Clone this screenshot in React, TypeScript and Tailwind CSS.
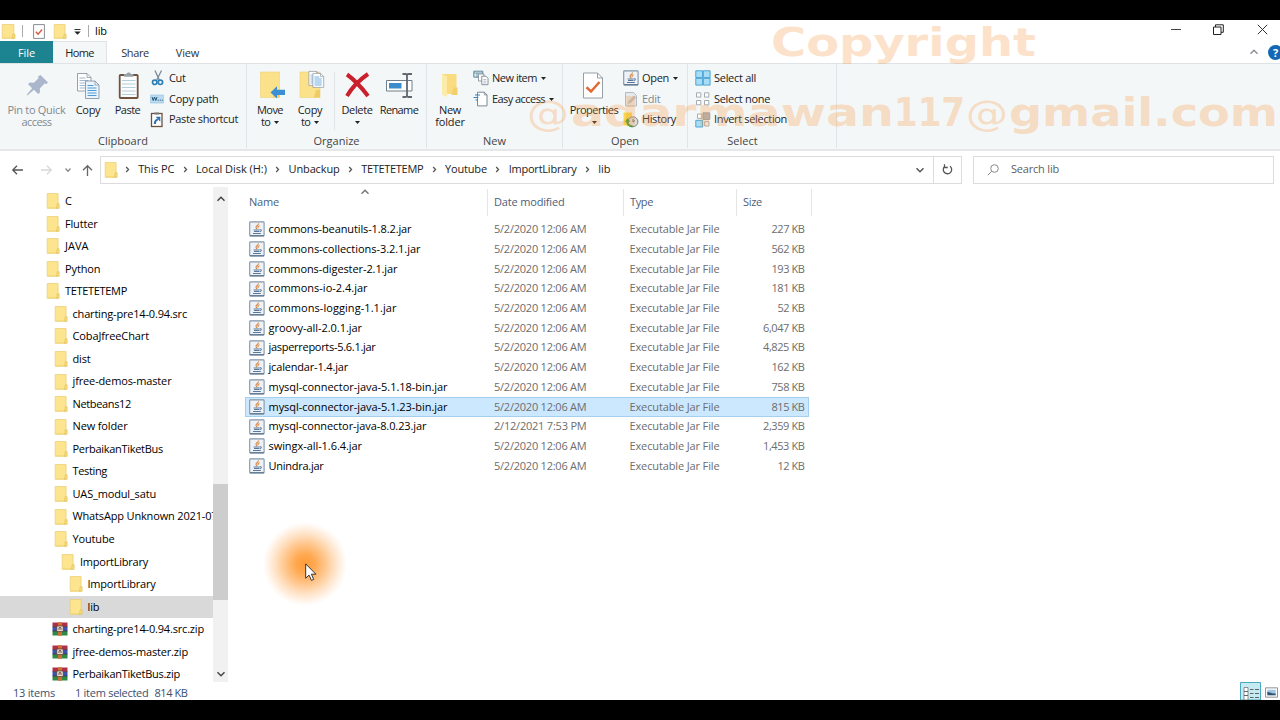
import { useLayoutEffect, useRef, type ReactNode } from 'react';

/** Text that is tracked so that it fills exactly `w` pixels. */
function Fit({ w, children, className = '' }: { w: number; children: string; className?: string }) {
  const ref = useRef<HTMLSpanElement>(null);
  useLayoutEffect(() => {
    const el = ref.current;
    if (!el) return;
    el.style.letterSpacing = '0px';
    const natural = el.getBoundingClientRect().width;
    el.style.letterSpacing = `${(w - natural) / children.length}px`;
  }, [w, children]);
  return (
    <span ref={ref} className={`inline-block shrink-0 whitespace-pre ${className}`}>
      {children}
    </span>
  );
}

function Folder({ className = 'h-4 w-[14px]' }: { className?: string }) {
  return (
    <svg viewBox="0 0 14 16" preserveAspectRatio="none" className={`shrink-0 overflow-visible ${className}`}>
      <path d="M.2.500h10.900v14.800H.2z" fill="#fde58f" stroke="#e9cb70" strokeWidth=".7" />
      <path d="M10.200 10.800h2v4.500H9.400z" fill="#f9db76" stroke="#d9b955" strokeWidth=".5" />
      <path d="M.6 14.800h8.600" stroke="#f3d774" strokeWidth=".8" />
    </svg>
  );
}

function Jar({ className = 'h-4 w-4' }: { className?: string }) {
  return (
    <svg viewBox="0 0 16 16" fill="none" className={`shrink-0 ${className}`}>
      <rect x=".7" y=".9" width="14.400" height="14.200" rx=".8" fill="#eef2f6" stroke="#8197ac" strokeWidth="1.100" />
      <path d="M1 14.600h14" stroke="#60788f" strokeWidth="1" />
      <path d="M9.300 2.400c1 1.600-2.700 2.300-2.300 3.900.1.700.9 1.100.8 1.900M10.600 4.700C8.800 5.300 8.700 6.200 9.300 7.100" stroke="#d58a48" strokeWidth="1.100" />
      <path d="M4.600 8.900h6.200M5 10.500h5.200M4 12.500h7.800M11 8.800c1.900-.3 1.700 1.600-.3 2" stroke="#57789b" strokeWidth="1.050" />
    </svg>
  );
}

function Rar() {
  return (
    <svg viewBox="0 0 16 14" className="-ml-px mr-px h-[14px] w-4 shrink-0">
      <path d="M.5.500h15v4.300H.5z" fill="#b0304a" />
      <path d="M.5 4.800h15v4.200H.5z" fill="#3a55b0" />
      <path d="M.5 9h15v4.500H.5z" fill="#2f8a45" />
      <path d="M.5 4.700h15M.5 9h15" stroke="#3a2430" strokeWidth=".6" />
      <path d="M6 .3h4v13.400H6z" fill="#cf6f35" />
      <path d="M4.800 4h6.400v5.600H4.800z" fill="#f2ebe6" stroke="#5b3a2e" strokeWidth=".8" />
      <path d="M7 8.200V5.700h2v2.500" fill="none" stroke="#5b3a2e" strokeWidth=".9" />
    </svg>
  );
}

function Chev({ d, className = 'h-[10px] w-[10px]' }: { d: 'r' | 'd' | 'u'; className?: string }) {
  const p = { r: 'M3.500 2.200l2.700 2.800-2.700 2.800', d: 'M1.500 3.200L5 6.800l3.500-3.600', u: 'M1.500 6.800L5 3.200l3.500 3.600' }[d];
  return (
    <svg viewBox="0 0 10 10" fill="none" stroke="currentColor" className={`shrink-0 ${className}`}>
      <path d={p} strokeWidth="1.400" />
    </svg>
  );
}

function Caret({ className = '' }: { className?: string }) {
  return (
    <svg viewBox="0 0 5 3" className={`h-[3px] w-[5px] shrink-0 ${className}`}>
      <path d="M0 0h5L2.500 3z" fill="#222" />
    </svg>
  );
}

function Page({ x = 0, y = 0, lines = '#9db8cf', fill = '#fff' }: { x?: number; y?: number; lines?: string; fill?: string }) {
  return (
    <g transform={`translate(${x} ${y})`}>
      <path d="M.5.500h9.500l4 4v13.500H.5z" fill={fill} stroke="#7e8b98" strokeWidth=".8" />
      <path d="M10 .5v4h4" fill="none" stroke="#7e8b98" strokeWidth=".7" />
      <path d="M2.500 5h6M2.500 7.500h9M2.500 10h9M2.500 12.500h9M2.500 15h9" stroke={lines} strokeWidth="1" />
    </g>
  );
}

const big = 'h-[30px] w-[30px] overflow-visible';
const PinIcon = () => (
  <svg viewBox="0 0 30 30" className={big}>
    <path d="M18.500 5l7.500 7.500-1.700 1.500-1.700-.5-4.800 5 .2 4-1.800 1.500-4.300-4.300-6.500 5.700-.6-.6 5.300-6.500-4-4 1.500-1.800 4.300.2 4.600-4.500-.5-1.800z" fill="#a9b6cb" />
  </svg>
);
const CopyIcon = () => (
  <svg viewBox="0 0 30 30" className={big}>
    <Page x={4} y={3} />
    <Page x={12} y={10.500} lines="#4c9bd8" fill="#eaf4fc" />
  </svg>
);
const PasteIcon = () => (
  <svg viewBox="0 0 30 30" className={big}>
    <rect x="6.700" y="5" width="18" height="23" rx=".8" fill="#fbfcfd" stroke="#70543f" strokeWidth="1.800" />
    <path d="M11 6.700V4h2.500c.4-2 4-2 4.400 0h2.500v2.700z" fill="#9aa1a7" />
    <path d="M9 10.500h13.500M9 14h13.500M9 17.500h13.500M9 21h13.500M9 24.500h13.500" stroke="#b5cede" />
  </svg>
);
const MoveIcon = () => (
  <svg viewBox="0 0 30 30" className={big}>
    <path d="M5.500 2h19v25.500h-19z" fill="#fbe18a" stroke="#efd27b" strokeWidth=".6" />
    <path d="M20 21h4.500v6.500H18z" fill="#efcb63" />
    <path d="M15.500 22.500l6.500-6.300v3.500h8v5.300h-8v3.600z" fill="#3c8fd3" />
  </svg>
);
const CopyToIcon = () => (
  <svg viewBox="0 0 30 30" className={big}>
    <path d="M5 2h20v25.500H5z" fill="#fbe18a" stroke="#efd27b" strokeWidth=".6" />
    <path d="M21 20h4v7.500h-6z" fill="#efcb63" />
    <g transform="translate(13.500 1) scale(.8)">
      <Page lines="#6ca8d8" />
      <Page x={5} y={2.500} lines="#4c9bd8" />
    </g>
  </svg>
);
const DeleteIcon = () => (
  <svg viewBox="0 0 30 30" className={big}>
    <path d="M5 4.500C12 9.500 20 18 26 26M26 4C18 9.500 10 17.500 5 26" fill="none" stroke="#c9202b" strokeWidth="4" />
  </svg>
);
const RenameIcon = () => (
  <svg viewBox="0 0 30 30" className={big}>
    <path d="M2.500 10.500h25.500v10.500H2.500z" fill="#fff" stroke="#6f7f8d" />
    <path d="M5 13h12.500v5.500H5z" fill="#3a8ccc" />
    <path d="M18.500 4h3c1 0 1.500.6 1.500 1.500v20c0 1-.5 1.500-1.500 1.500h-3M28 4h-3.300c-1 0-1.700.6-1.700 1.500M28 27h-3.300c-1 0-1.700-.5-1.700-1.500" fill="none" stroke="#5f676e" strokeWidth="1.800" />
  </svg>
);
const NewFolderIcon = () => (
  <svg viewBox="0 0 30 30" className={big}>
    <path d="M7 4h14.500v20H7z" fill="#f9dc80" />
    <path d="M7 4l5 2.500v20.500l-5-2.500z" fill="#fdeba8" />
    <path d="M18.500 17.500h4v7.500h-6z" fill="#f2cf6b" />
  </svg>
);
const PropsIcon = () => (
  <svg viewBox="0 0 30 30" className={big}>
    <path d="M4.500 3h14l5 5v20h-19z" fill="#fff" stroke="#8b949c" strokeWidth=".9" />
    <path d="M18.500 3v5h5" fill="none" stroke="#8b949c" strokeWidth=".9" />
    <path d="M7.500 17.300l4.500 4.200 8.500-9.500" fill="none" stroke="#df6a35" strokeWidth="2.600" />
  </svg>
);

const small = 'h-4 w-4 shrink-0 overflow-visible';
const CutIcon = () => (
  <svg viewBox="0 0 16 16" fill="none" className={small}>
    <path d="M5 .5l4.500 10M11.500.5L6.500 10.500" stroke="#7b8896" strokeWidth="1.300" />
    <ellipse cx="4.700" cy="12.300" rx="2.200" ry="2.200" stroke="#2b7fb5" strokeWidth="1.700" />
    <ellipse cx="10.400" cy="12.300" rx="2.200" ry="2.200" stroke="#2b7fb5" strokeWidth="1.700" />
  </svg>
);
const PathIcon = () => (
  <svg viewBox="0 0 16 16" fill="none" className={small}>
    <path d="M.5 4h13v8H.5z" fill="#b9dcf3" stroke="#9cc6e2" strokeWidth=".7" />
    <path d="M2 6l1.200 3.500L4.500 6l1.300 3.500L7 6M7.800 9.200h1M9.800 9.200h1M11.800 9.200h1" stroke="#27506e" />
  </svg>
);
const ShortcutIcon = () => (
  <svg viewBox="0 0 16 16" fill="none" className={small}>
    <rect x="1.500" y="1.500" width="10.500" height="13" fill="#fff" stroke="#6e513d" strokeWidth="1.300" />
    <path d="M4.500.5h4.500v2H4.500z" fill="#777" />
    <path d="M4.800 12c0-3 .8-4 3-4.600" stroke="#2f6eae" strokeWidth="2" />
    <path d="M5.600 4.700h4.700v5z" fill="#2f6eae" />
  </svg>
);
const NewItemIcon = () => (
  <svg viewBox="0 0 16 16" fill="none" className={small}>
    <path d="M.8 1.200h9v6h-9z" fill="#d9edf6" stroke="#62879c" />
    <path d="M1 3h9M4 3v4" stroke="#62879c" strokeWidth=".8" />
    <path d="M5.500 4h5.500v7H5.500z" fill="#fff" stroke="#7b8894" strokeWidth=".8" />
    <path d="M8.800 6.200h4.200l2 2v6.500H8.800z" fill="#fff" stroke="#7b8894" strokeWidth=".9" />
    <path d="M10.300 9.500h3M10.300 11.200h3M10.300 12.900h3" stroke="#93a4b2" strokeWidth=".7" />
  </svg>
);
const EasyIcon = () => (
  <svg viewBox="0 0 16 16" fill="none" className={small}>
    <path d="M4.500 1.200h6.800l2.700 2.700v11H4.500z" fill="#fff" stroke="#7b8894" />
    <path d="M11.300 1.200v2.700H14" stroke="#7b8894" strokeWidth=".8" />
    <path d="M2 4h5M.5 6.500h4.800M2.500 9h2.500" stroke="#3b83bd" strokeWidth="1.100" />
  </svg>
);
const EditIcon = () => (
  <svg viewBox="0 0 16 16" fill="none" className={small}>
    <path d="M2.500 1.500h8l3 3v10.500h-11z" fill="#e6e8eb" stroke="#b5babf" />
    <path d="M4.500 13l1-3L11 4.500l2.300 2L7.500 12z" fill="#bcc2c7" />
  </svg>
);
const HistoryIcon = () => (
  <svg viewBox="0 0 16 16" fill="none" className={small}>
    <path d="M.5.500h8.500v13H.5z" fill="#f6d84f" />
    <circle cx="10" cy="9.800" r="4.900" fill="#d9dfdc" stroke="#7b8583" />
    <path d="M10 10V7M10 10l2-1.500" stroke="#656c70" />
    <path d="M9.500 14.300c-4 0-5.500-2.500-5-5.800" stroke="#42a238" strokeWidth="2.200" />
    <path d="M1.800 9.800l3-3.800 2.500 3.800z" fill="#42a238" />
  </svg>
);
const AllIcon = () => (
  <svg viewBox="0 0 16 16" fill="none" className={small}>
    <path d="M.8.800h6.800v6.800H.8zM8.300.8h6.800v6.800H8.300zM.8 8.300h6.800v6.800H.8zM8.300 8.300h6.800v6.800H8.300z" fill="#a9ddf6" stroke="#3d9dd2" strokeWidth=".9" />
  </svg>
);
const NoneIcon = () => (
  <svg viewBox="0 0 16 16" fill="none" className={small}>
    <path d="M1.500 1.800h4.300v4.300H1.500zM9.500 1.800h4.300v4.300H9.500zM1.500 9.500h4.300v4.300H1.500zM9.500 9.500h4.300v4.300H9.500z" fill="#fff" stroke="#9da3a8" strokeWidth=".9" />
  </svg>
);
const InvertIcon = () => (
  <svg viewBox="0 0 16 16" fill="none" className={small}>
    <path d="M2.500 2h4.300v4.300H2.500zM9.700 9.700H14V14H9.700z" fill="#fff" stroke="#9da3a8" strokeWidth=".9" />
    <path d="M8 .8h6.800v6.700H8z" fill="#aab4bc" stroke="#8b949b" strokeWidth=".8" />
    <path d="M.8 8.300h6.800v6.700H.8z" fill="#a9ddf6" stroke="#3d9dd2" strokeWidth=".9" />
  </svg>
);

function Group({ label, width, children, pad = '' }: { label: string; width: string; children: ReactNode; pad?: string }) {
  return (
    <div className={`flex h-[84px] flex-col border-r border-[#e2e5e7] ${width}`}>
      <div className={`flex h-[69px] pt-[4px] ${pad}`}>{children}</div>
      <div className="text-center leading-[15px] text-[#444]">{label}</div>
    </div>
  );
}

function BigButton({ icon, width, lines, caret, dim }: { icon: ReactNode; width: string; lines: [string, number][]; caret?: 'inline' | 'below'; dim?: boolean }) {
  return (
    <div className={`flex shrink-0 flex-col items-center pt-[2px] ${width} ${dim ? 'text-[#828890]' : 'text-[#222]'}`}>
      {icon}
      <div className="mt-[4px] flex flex-col items-center">
        {lines.map(([t, w], i) => (
          <div key={t} className="flex h-3 items-center justify-center gap-1 leading-3">
            <Fit w={w}>{t}</Fit>
            {caret === 'inline' && i === lines.length - 1 && <Caret />}
          </div>
        ))}
        {caret === 'below' && <Caret className="mt-[5px]" />}
      </div>
    </div>
  );
}

function SmallList({ items, className = '' }: { items: { icon: ReactNode; text: string; w: number; caret?: boolean; dim?: boolean }[]; className?: string }) {
  return (
    <div className={`flex shrink-0 flex-col ${className}`}>
      {items.map((it) => (
        <div key={it.text} className={`flex h-[20.700px] items-center gap-[3px] ${it.dim ? 'text-[#828890]' : 'text-[#222]'}`}>
          {it.icon}
          <Fit w={it.w}>{it.text}</Fit>
          {it.caret && <Caret className="ml-[1px]" />}
        </div>
      ))}
    </div>
  );
}

const crumbs: [string, number][] = [
  ['This PC', 36], ['Local Disk (H:)', 71], ['Unbackup', 51], ['TETETETEMP', 62], ['Youtube', 42], ['ImportLibrary', 68], ['lib', 12],
];

const tree: { t: string; w: number; pad: string; zip?: boolean; sel?: boolean }[] = [
  { t: 'C', w: 7, pad: 'pl-[47px]' },
  { t: 'Flutter', w: 32.5, pad: 'pl-[47px]' },
  { t: 'JAVA', w: 23.5, pad: 'pl-[47px]' },
  { t: 'Python', w: 35.5, pad: 'pl-[47px]' },
  { t: 'TETETETEMP', w: 62, pad: 'pl-[47px]' },
  { t: 'charting-pre14-0.94.src', w: 114.5, pad: 'pl-[54.5px]' },
  { t: 'CobaJfreeChart', w: 76.5, pad: 'pl-[54.5px]' },
  { t: 'dist', w: 18, pad: 'pl-[54.5px]' },
  { t: 'jfree-demos-master', w: 99, pad: 'pl-[54.5px]' },
  { t: 'Netbeans12', w: 58.5, pad: 'pl-[54.5px]' },
  { t: 'New folder', w: 55, pad: 'pl-[54.5px]' },
  { t: 'PerbaikanTiketBus', w: 90.5, pad: 'pl-[54.5px]' },
  { t: 'Testing', w: 34.5, pad: 'pl-[54.5px]' },
  { t: 'UAS_modul_satu', w: 83.5, pad: 'pl-[54.5px]' },
  { t: 'WhatsApp Unknown 2021-07', w: 145, pad: 'pl-[54.5px]' },
  { t: 'Youtube', w: 42, pad: 'pl-[54.5px]' },
  { t: 'ImportLibrary', w: 68, pad: 'pl-[62px]' },
  { t: 'ImportLibrary', w: 68, pad: 'pl-[69.5px]' },
  { t: 'lib', w: 12, pad: 'pl-[69.5px]', sel: true },
  { t: 'charting-pre14-0.94.src.zip', w: 131.5, pad: 'pl-[52.5px]', zip: true },
  { t: 'jfree-demos-master.zip', w: 115.5, pad: 'pl-[52.5px]', zip: true },
  { t: 'PerbaikanTiketBus.zip', w: 107.5, pad: 'pl-[52.5px]', zip: true },
];

const files: [string, number, string, string, number][] = [
  ['commons-beanutils-1.8.2.jar', 143, '5/2/2020 12:06 AM', '227 KB', 33],
  ['commons-collections-3.2.1.jar', 152, '5/2/2020 12:06 AM', '562 KB', 33],
  ['commons-digester-2.1.jar', 129, '5/2/2020 12:06 AM', '193 KB', 33],
  ['commons-io-2.4.jar', 99, '5/2/2020 12:06 AM', '181 KB', 33],
  ['commons-logging-1.1.jar', 128, '5/2/2020 12:06 AM', '52 KB', 27],
  ['groovy-all-2.0.1.jar', 93.5, '5/2/2020 12:06 AM', '6,047 KB', 41.5],
  ['jasperreports-5.6.1.jar', 107, '5/2/2020 12:06 AM', '4,825 KB', 41.5],
  ['jcalendar-1.4.jar', 79.5, '5/2/2020 12:06 AM', '162 KB', 33],
  ['mysql-connector-java-5.1.18-bin.jar', 179, '5/2/2020 12:06 AM', '758 KB', 33],
  ['mysql-connector-java-5.1.23-bin.jar', 179, '5/2/2020 12:06 AM', '815 KB', 33],
  ['mysql-connector-java-8.0.23.jar', 158, '2/12/2021 7:53 PM', '2,359 KB', 41.5],
  ['swingx-all-1.6.4.jar', 93.5, '5/2/2020 12:06 AM', '1,453 KB', 41.5],
  ['Unindra.jar', 55, '5/2/2020 12:06 AM', '12 KB', 27],
];

export default function App() {
  return (
    <div className="relative h-[720px] w-[1280px] overflow-hidden bg-black py-5 font-['Open_Sans','Noto_Sans',sans-serif] text-[11px] text-black">
      <div className="flex h-[680px] flex-col overflow-hidden bg-white">
        {/* title bar */}
        <div className="flex h-[21px] shrink-0 items-center pt-px">
          <Folder className="ml-[2px] h-[15px] w-[15px]" />
          <div className="ml-[5px] h-3 w-px bg-[#aaa]" />
          <svg viewBox="0 0 12 15" fill="none" className="ml-[10px] h-[15px] w-3">
            <path d="M.6.600h10.800v13.800H.6z" fill="#fff" stroke="#878d93" />
            <path d="M2.800 7.800l2.300 2.300 4-4.600" stroke="#d25a42" strokeWidth="1.400" />
          </svg>
          <Folder className="ml-[9px] h-[15px] w-[14px]" />
          <svg viewBox="0 0 7 6" className="ml-[6px] mt-px h-[6px] w-[7px]">
            <path d="M.5.500h6" stroke="#333" />
            <path d="M.3 2.500h6.400L3.500 5.700z" fill="#222" />
          </svg>
          <div className="ml-[7px] h-3 w-px bg-[#aaa]" />
          <Fit w={12} className="ml-[6px]">lib</Fit>
          <div className="ml-auto flex items-center pb-[3px] text-[#333]">
            <div className="mr-[32px] h-px w-[10px] bg-[#444]" />
            <svg viewBox="0 0 11 11" fill="none" stroke="#222" className="mr-[33px] h-[11px] w-[11px]">
              <path d="M.5 3h7.500v7.500H.5zM2.500 3V.8h7.800v7.500H8" />
            </svg>
            <svg viewBox="0 0 11 11" fill="none" stroke="#333" className="mr-[12px] h-[11px] w-[11px]">
              <path d="M.8.800l9.400 9.400M10.200.8L.8 10.200" />
            </svg>
          </div>
        </div>
        {/* tabs */}
        <div className="flex h-[22px] shrink-0">
          <div className="flex w-[53px] items-center justify-center bg-[#1b8490] pt-[2px] text-white"><Fit w={17}>File</Fit></div>
          <div className="flex w-[54px] items-center justify-center border-r border-t border-[#dfe3e5] bg-[#f4f7f8] pt-[1px] text-[#222]"><Fit w={28.5}>Home</Fit></div>
          <div className="flex w-[56px] items-center justify-center pt-[2px] text-[#333]"><Fit w={27.5}>Share</Fit></div>
          <div className="flex w-[49px] items-center justify-center pt-[2px] text-[#333]"><Fit w={23.5}>View</Fit></div>
          <div className="-mr-[3px] ml-auto flex items-center">
            <Chev d="u" className="mr-[9px] h-[10px] w-[10px] text-[#8a8f94]" />
            <div className="h-[15px] w-[15px] shrink-0 rounded-full bg-[#1467b3] text-center text-[11px] font-bold leading-[15px] text-white">?</div>
          </div>
        </div>
        {/* ribbon */}
        <div className="flex h-[88px] shrink-0 border-b-2 border-t border-b-[#e6e7e8] border-t-[#dfe3e5] bg-[#f4f7f8]">
          <Group label="Clipboard" width="w-[247px]" pad="pl-[5px]">
            <BigButton icon={<PinIcon />} width="w-[63px]" lines={[['Pin to Quick', 58], ['access', 30]]} dim />
            <BigButton icon={<CopyIcon />} width="w-[40px]" lines={[['Copy', 24.5]]} />
            <BigButton icon={<PasteIcon />} width="w-[39px]" lines={[['Paste', 25.5]]} />
            <SmallList
              className="ml-[3px]"
              items={[
                { icon: <CutIcon />, text: 'Cut', w: 16.5 },
                { icon: <PathIcon />, text: 'Copy path', w: 49.5 },
                { icon: <ShortcutIcon />, text: 'Paste shortcut', w: 69 },
              ]}
            />
          </Group>
          <Group label="Organize" width="w-[180px]" pad="pl-[3px]">
            <BigButton icon={<MoveIcon />} width="w-[40px]" lines={[['Move', 26], ['to', 9]]} caret="inline" />
            <BigButton icon={<CopyToIcon />} width="w-[40px]" lines={[['Copy', 24.5], ['to', 9]]} caret="inline" />
            <div className="ml-[4px] mr-[2px] mt-1 h-[58px] w-px shrink-0 bg-[#e1e4e6]" />
            <BigButton icon={<DeleteIcon />} width="w-[40px]" lines={[['Delete', 31]]} caret="below" />
            <BigButton icon={<RenameIcon />} width="w-[44px]" lines={[['Rename', 38.5]]} />
          </Group>
          <Group label="New" width="w-[136px]" pad="pl-[3px]">
            <BigButton icon={<NewFolderIcon />} width="w-[40px]" lines={[['New', 22], ['folder', 29.5]]} />
            <SmallList
              className="ml-[3px]"
              items={[
                { icon: <NewItemIcon />, text: 'New item', w: 45, caret: true },
                { icon: <EasyIcon />, text: 'Easy access', w: 53, caret: true },
              ]}
            />
          </Group>
          <Group label="Open" width="w-[125px]" pad="pl-[2px]">
            <BigButton icon={<PropsIcon />} width="w-[58px]" lines={[['Properties', 48.5]]} caret="below" />
            <SmallList
              items={[
                { icon: <Jar />, text: 'Open', w: 27, caret: true },
                { icon: <EditIcon />, text: 'Edit', w: 18.5, dim: true },
                { icon: <HistoryIcon />, text: 'History', w: 34 },
              ]}
            />
          </Group>
          <div className="flex h-[84px] border-r border-[#e2e5e7] pr-[39px]">
            <div className="flex w-[109px] flex-col">
              <div className="flex h-[69px] pl-[7px] pt-[4px]">
                <SmallList
                  items={[
                    { icon: <AllIcon />, text: 'Select all', w: 42 },
                    { icon: <NoneIcon />, text: 'Select none', w: 56 },
                    { icon: <InvertIcon />, text: 'Invert selection', w: 73 },
                  ]}
                />
              </div>
              <div className="text-center leading-[15px] text-[#444]">Select</div>
            </div>
          </div>
        </div>
        {/* address bar */}
        <div className="flex h-[36px] shrink-0 items-center pt-[1px]">
          <svg viewBox="0 0 88 14" fill="none" strokeWidth="1.300" className="ml-[10px] h-[14px] w-[88px]">
            <path d="M13 7H3M7 2.800L2.800 7 7 11.200" stroke="#555" />
            <path d="M31 7h10M37 2.800L41.200 7 37 11.200" stroke="#d5d8da" />
            <path d="M55.500 5.500l2.500 2.700 2.500-2.700" stroke="#888" />
            <path d="M77.500 13V3M73 7.300l4.500-4.600L82 7.300" stroke="#666" />
          </svg>
          <div className="ml-[2px] flex h-[28px] w-[862px] items-center border border-[#dcdcdc]">
            <Folder className="ml-[4px] h-4 w-[14px]" />
            <div className="ml-[-2.500px] flex items-center">
              {crumbs.map(([t, w]) => (
                <div key={t} className="flex items-center">
                  <div className="flex w-[21.700px] justify-center text-[#555]"><Chev d="r" className="h-[9px] w-[9px]" /></div>
                  <Fit w={w} className="text-[#222]">{t}</Fit>
                </div>
              ))}
            </div>
            <Chev d="d" className="ml-auto mr-[8px] h-[10px] w-[10px] text-[#555]" />
            <div className="flex h-full w-[28px] items-center justify-center border-l border-[#dcdcdc]">
              <svg viewBox="0 0 11 11" fill="none" stroke="#555" strokeWidth="1.300" className="h-[11px] w-[11px]">
                <path d="M2.800 2.300A4.200 4.200 0 1 0 8 2.200M2.500.3v3.200h3.300" />
              </svg>
            </div>
          </div>
          <div className="ml-[11px] flex h-[28px] w-[301px] items-center border border-[#dcdcdc]">
            <svg viewBox="0 0 12 12" fill="none" stroke="#888" className="ml-[13px] h-3 w-3">
              <circle cx="7.500" cy="4.500" r="3.800" />
              <path d="M4.700 7.300L.8 11.200" />
            </svg>
            <Fit w={48} className="ml-[12px] text-[#606060]">Search lib</Fit>
          </div>
        </div>
        {/* body */}
        <div className="flex h-[495px] shrink-0">
          <div className="w-[213px] shrink-0 overflow-hidden pt-[3px]">
            {tree.map((n, i) => (
              <div key={i} className={`flex h-[22.540px] items-center ${n.pad} ${n.sel ? 'bg-[#d9d9d9]' : ''}`}>
                {n.zip ? <Rar /> : <Folder />}
                <Fit w={n.w} className="ml-[4px]">{n.t}</Fit>
              </div>
            ))}
          </div>
          <div className="flex w-[15px] shrink-0 flex-col items-center bg-[#f1f1f1]">
            <Chev d="u" className="mt-[7px] h-[10px] w-[10px] text-[#444]" />
            <div className="mt-[280px] h-[116px] w-full bg-[#cdcdcd]" />
            <Chev d="d" className="mb-[3px] mt-auto h-[10px] w-[10px] text-[#444]" />
          </div>
          <div className="ml-[4px] flex flex-col">
            <div className="flex h-[32.500px] pb-[4px] pt-[2px] text-[#4c607a]">
              <div className="relative flex w-[256px] items-center border-r border-[#e5e5e5] pl-[17px]">
                <Fit w={30}>Name</Fit>
                <Chev d="u" className="absolute left-[128px] top-[-2px] h-[10px] w-[10px] text-[#777]" />
              </div>
              <div className="flex w-[136px] items-center border-r border-[#e5e5e5] pl-[6px]"><Fit w={70.5}>Date modified</Fit></div>
              <div className="flex w-[113px] items-center border-r border-[#e5e5e5] pl-[6px]"><Fit w={23}>Type</Fit></div>
              <div className="flex w-[75px] items-center border-r border-[#e5e5e5] pl-[6px]"><Fit w={19}>Size</Fit></div>
            </div>
            <div className="ml-[13px] w-[564px]">
              {files.map(([name, w, date, size, sw], i) => (
                <div key={name} className={`flex h-[19.730px] items-center ${i === 9 ? 'bg-[#cce8ff] outline -outline-offset-1 outline-[#a5cfec]' : ''}`}>
                  <div className="flex w-[249px] items-center pl-[4px]">
                    <Jar />
                    <Fit w={w} className="ml-[3.500px]">{name}</Fit>
                  </div>
                  <Fit w={92.5} className="text-[#6d6d6d]">{date}</Fit>
                  <Fit w={90} className="ml-[43px] text-[#6d6d6d]">Executable Jar File</Fit>
                  <Fit w={sw} className="ml-auto mr-[4.500px] text-[#6d6d6d]">{size}</Fit>
                </div>
              ))}
            </div>
          </div>
        </div>
        {/* status bar */}
        <div className="flex h-[18px] shrink-0 items-center pl-[13px] text-[#3b4f70]">
          <div className="flex items-center pt-[5px]">
            <Fit w={42}>13 items</Fit>
            <Fit w={73.5} className="ml-[20px]">1 item selected</Fit>
            <Fit w={33} className="ml-[6px]">814 KB</Fit>
          </div>
          <svg viewBox="0 0 21 18" fill="none" className="ml-auto h-[18px] w-[21px]">
            <path d="M.5.500h20V18H.5z" fill="#c5eaf1" stroke="#4aa9bd" />
            <path d="M4 5.500h4V18H4z" fill="#fff" stroke="#777" strokeWidth=".8" />
            <path d="M4 9.500h4M4 13.500h4M10 7.500h3.500M15 7.500h4M10 11.500h3.500M15 11.500h4M10 15.500h3.500M15 15.500h4" stroke="#555" strokeWidth=".9" />
          </svg>
          <svg viewBox="0 0 14 11" fill="none" className="ml-[4px] mr-[2px] mt-[2px] h-[11px] w-[13px]">
            <path d="M.5.500h13v10H.5z" fill="#fff" stroke="#888" />
            <path d="M2.500 2.500h9v6h-9z" fill="#9fc6e3" />
            <path d="M2.500 5c3 0 5 2 9 1.500v2h-9z" fill="#33546f" />
          </svg>
        </div>
      </div>

      {/* pointer highlight */}
      <div className="absolute left-[263px] top-[522px] h-[84px] w-[84px] bg-[radial-gradient(closest-side,#ff9c38_0%,#ffa850_22%,#ffc68c_48%,#ffe3c8_72%,#fff6ee_90%,#ffffff00_100%)]" />
      <svg viewBox="0 0 12 19" className="absolute left-[305px] top-[563px] h-[19px] w-3">
        <path d="M.7.900v14.300l3.400-3.100 2.300 5.300 2.300-1-2.300-5.200h4.500z" fill="#fff" stroke="#222" strokeWidth=".9" />
      </svg>

      {/* watermark */}
      <svg viewBox="0 0 760 120" className="pointer-events-none absolute left-[520px] top-5 h-[120px] w-[760px] fill-[#f79a46] font-['DejaVu_Sans',sans-serif] text-[39px] font-bold opacity-[.28]">
        <text x="251" y="36" textLength="265" lengthAdjust="spacingAndGlyphs">Copyright</text>
        <text x="7" y="106" textLength="42" lengthAdjust="spacingAndGlyphs" className="text-[36px] font-normal">@</text>
        <text x="51" y="106" textLength="323" lengthAdjust="spacingAndGlyphs">adarmawan</text>
        <text x="374" y="106" textLength="71" lengthAdjust="spacingAndGlyphs">117</text>
        <text x="446" y="106" textLength="42" lengthAdjust="spacingAndGlyphs" className="text-[36px] font-normal">@</text>
        <text x="489" y="106" textLength="269" lengthAdjust="spacingAndGlyphs">gmail.com</text>
      </svg>
    </div>
  );
}
